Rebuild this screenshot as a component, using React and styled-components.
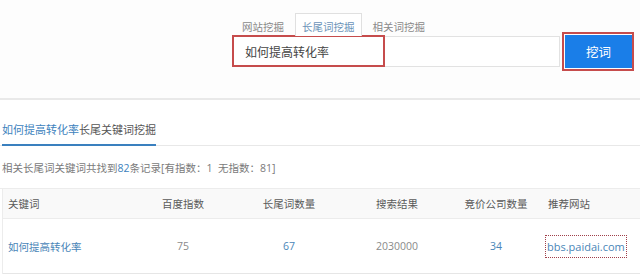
import React from "react";
import styled, { createGlobalStyle } from "styled-components";

const FONT = `"Open Sans", "Noto Sans CJK SC", sans-serif`;

const GlobalStyle = createGlobalStyle`
  html, body {
    margin: 0;
    padding: 0;
    background: #ffffff;
    font-family: ${FONT};
  }
  * {
    box-sizing: border-box;
  }
`;

const TABS = ["网站挖掘", "长尾词挖掘", "相关词挖掘"];

// link: value shown as a blue link in the body row
const COLUMNS = [
  { key: "keyword", title: "关键词", width: 130, align: "left", link: true },
  { key: "index", title: "百度指数", width: 100, align: "center" },
  { key: "longtail", title: "长尾词数量", width: 112, align: "center", link: true },
  { key: "result", title: "搜索结果", width: 104, align: "center" },
  { key: "bid", title: "竞价公司数量", width: 94, align: "center", link: true },
  { key: "site", title: "推荐网站", width: 97, align: "left" },
];

const ROWS = [
  {
    keyword: "如何提高转化率",
    index: "75",
    longtail: "67",
    result: "2030000",
    bid: "34",
    site: "bbs.paidai.com",
  },
];

function App() {
  const [activeTab, setActiveTab] = React.useState(1);
  const [query, setQuery] = React.useState("如何提高转化率");

  return (
    <Page>
      <GlobalStyle />
      <TopBar>
        <SearchBlock>
          <Tabs>
            {TABS.map((tab, i) => (
              <Tab
                key={tab}
                $active={i === activeTab}
                onClick={() => setActiveTab(i)}
              >
                {tab}
              </Tab>
            ))}
          </Tabs>
          <SearchRow>
            <InputWrap>
              <SearchInput
                value={query}
                onChange={(e) => setQuery(e.target.value)}
              />
              <InputMark />
            </InputWrap>
            <ButtonWrap>
              <SearchButton type="button">挖词</SearchButton>
              <ButtonMark />
            </ButtonWrap>
          </SearchRow>
        </SearchBlock>
      </TopBar>

      <SectionHead>
        <HeadTab>
          <Accent>{query}</Accent>长尾关键词挖掘
        </HeadTab>
      </SectionHead>

      <Summary>
        相关长尾词关键词共找到<Accent>82</Accent>条记录[有指数：1&nbsp;&nbsp;无指数：81]
      </Summary>

      <Table>
        <HeadRow>
          {COLUMNS.map((col) => (
            <Cell key={col.key} $width={col.width} $align={col.align}>
              {col.title}
            </Cell>
          ))}
        </HeadRow>
        {ROWS.map((row) => (
          <BodyRow key={row.keyword}>
            {COLUMNS.map((col) => (
              <Cell key={col.key} $width={col.width} $align={col.align}>
                {col.key === "site" ? (
                  <SiteLink>{row[col.key]}</SiteLink>
                ) : col.link ? (
                  <LinkText>{row[col.key]}</LinkText>
                ) : (
                  row[col.key]
                )}
              </Cell>
            ))}
          </BodyRow>
        ))}
      </Table>
    </Page>
  );
}

const Page = styled.div`
  width: 640px;
  height: 277px;
  overflow: hidden;
  background: #ffffff;
`;
const TopBar = styled.div`
  height: 100px;
  background: #fdfdfd;
  border-bottom: 2px solid #e9e9e9;
  padding: 13px 0 0 232px;
`;
const SearchBlock = styled.div`
  display: flex;
  flex-direction: column;
`;
const Tabs = styled.div`
  display: flex;
  gap: 4px;
  padding-left: 3px;
  height: 23px;
  position: relative;
  z-index: 1;
`;
const Tab = styled.div`
  padding: 0 6px;
  font-size: 10.5px;
  cursor: pointer;
  color: ${(p) => (p.$active ? "#6b93b8" : "#8a8a8a")};
  background: ${(p) => (p.$active ? "#ffffff" : "transparent")};
  border: 1px solid ${(p) => (p.$active ? "#e0e0e0" : "transparent")};
  border-bottom: none;
  margin-top: ${(p) => (p.$active ? "0" : "3px")};
  height: ${(p) => (p.$active ? "23px" : "20px")};
  line-height: ${(p) => (p.$active ? "26px" : "20px")};
`;
const SearchRow = styled.div`
  display: flex;
  align-items: center;
  gap: 5px;
  margin-top: -1px;
`;
const InputWrap = styled.div`
  position: relative;
  width: 328px;
  height: 31px;
`;
const SearchInput = styled.input`
  width: 100%;
  height: 100%;
  border: 1px solid #e2e2e2;
  background: #ffffff;
  padding: 0 12px;
  font-family: ${FONT};
  font-size: 12px;
  color: #444444;
  outline: none;
`;
const InputMark = styled.div`
  position: absolute;
  left: 0;
  top: -1px;
  width: 153px;
  height: 32px;
  border: 2px solid #c64c4c;
  pointer-events: none;
`;
const ButtonWrap = styled.div`
  position: relative;
`;
const SearchButton = styled.button`
  display: block;
  width: 67px;
  height: 33px;
  border: none;
  background: #1a7ee8;
  color: #ffffff;
  font-family: ${FONT};
  font-size: 12.5px;
  cursor: pointer;
`;
const ButtonMark = styled.div`
  position: absolute;
  inset: -3px -2px -3px -3px;
  border: 2px solid #c64c4c;
  pointer-events: none;
`;
const SectionHead = styled.div`
  border-bottom: 1px solid #e8e8e8;
  padding-left: 2px;
`;
const HeadTab = styled.div`
  display: inline-block;
  padding: 21px 0 7px;
  font-size: 11px;
  color: #555555;
  border-bottom: 2px solid #3a80bf;
  margin-bottom: -1px;
`;
const Accent = styled.span`
  color: #3d82bd;
`;
const Summary = styled.div`
  padding: 14px 0 12px 2px;
  font-size: 10.5px;
  line-height: 16px;
  color: #7a7a7a;
  border-bottom: 1px solid #ececec;
`;
const Table = styled.div`
  margin-left: 2px;
  border-left: 1px solid #ececec;
`;
const HeadRow = styled.div`
  display: flex;
  height: 30px;
  align-items: center;
  background: #f9f9f9;
  border-bottom: 1px solid #ececec;
  font-size: 10.5px;
  color: #5a5a5a;
`;
const BodyRow = styled.div`
  display: flex;
  height: 55px;
  align-items: center;
  background: #ffffff;
  border-bottom: 1px solid #e6e6e6;
  font-size: 10.5px;
  color: #8a8a8a;
`;
const Cell = styled.div`
  flex: 0 0 ${(p) => p.$width}px;
  text-align: ${(p) => p.$align};
  padding-left: ${(p) => (p.$align === "left" ? "5px" : "0")};
  white-space: nowrap;
`;
const LinkText = styled.span`
  color: #4a86b8;
`;
const SiteLink = styled.span`
  display: inline-block;
  color: #4a86b8;
  font-size: 11px;
  padding: 3px 1px;
  margin-left: -2px;
  outline: 1px dotted #a0404a;
`;

export default App;
